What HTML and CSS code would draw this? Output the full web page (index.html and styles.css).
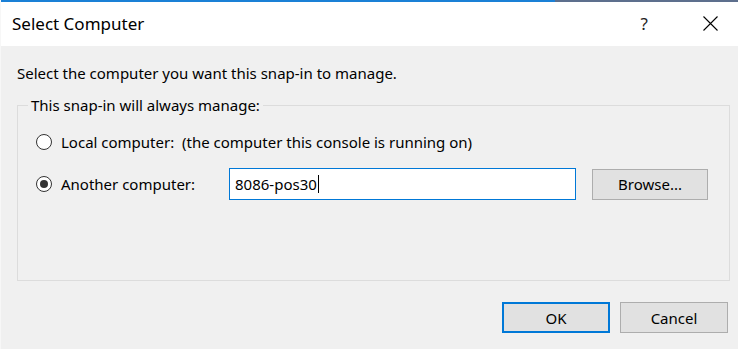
FILE: index.html
```html
<!DOCTYPE html>
<html lang="en">
  <head>
    <meta charset="UTF-8" />
    <meta name="viewport" content="width=device-width, initial-scale=1.0" />
    <title>Select Computer</title>
    <link rel="stylesheet" href="styles.css">
  </head>
  <body>
    <div class="window">
      <div class="frame-top"></div>
      <div class="titlebar">
        <span class="title">Select Computer</span>
        <span class="help-btn">?</span>
        <svg class="close-btn" width="15" height="15" viewBox="0 0 15 15">
          <path d="M0.5 0.5 L14.5 14.5 M14.5 0.5 L0.5 14.5" stroke="#000" stroke-width="1.1" fill="none" />
        </svg>
      </div>

      <div class="content">
        <p class="intro">Select the computer you want this snap-in to manage.</p>

        <fieldset class="group">
          <legend>This snap-in will always manage:</legend>
          <div class="row">
            <label class="option"><span class="radio"></span>Local computer:&nbsp; (the computer this console is running on)</label>
          </div>
          <div class="row">
            <label class="option option-fixed"><span class="radio checked"></span>Another computer:</label>
            <div class="textbox"><span>8086-pos30</span><span class="caret"></span></div>
            <button class="btn browse-btn">Browse...</button>
          </div>
        </fieldset>

        <div class="actions">
          <button class="btn default">OK</button>
          <button class="btn">Cancel</button>
        </div>
      </div>
    </div>
  </body>
</html>
```

FILE: styles.css
```css
* {
  margin: 0;
  padding: 0;
  box-sizing: border-box;
}

body {
  font-family: 'Noto Sans', 'Open Sans', sans-serif;
  font-size: 15px;
  color: #000;
  background-color: #f0f0f0;
  width: 738px;
  height: 349px;
  overflow: hidden;
}

.window {
  height: 349px;
  background-color: #f0f0f0;
  border-left: 1px solid #f7f7f7;
}

.frame-top {
  height: 2px;
  background: linear-gradient(to right, #1a80d6 0, #1a80d6 554px, #5d6f8d 554px);
}

.titlebar {
  height: 44px;
  background-color: #fff;
  display: flex;
  align-items: center;
  padding-left: 11px;
}

.title {
  font-size: 17px;
  flex: 1;
  padding-bottom: 2px;
}

.help-btn {
  font-size: 17px;
  color: #222;
  margin-right: 55px;
  padding-bottom: 2px;
}

.close-btn {
  margin-right: 20px;
  margin-bottom: 2px;
}

.content {
  padding: 17px 8px 0 16px;
}

.intro {
  line-height: 20px;
}

.group {
  margin-top: 12px;
  border: 1px solid #dcdcdc;
  padding: 11px 0 80px 0;
}

.group legend {
  margin-left: 10px;
  padding: 0 3px;
  line-height: 20px;
}

.row {
  height: 32px;
  display: flex;
  align-items: center;
  padding-left: 18px;
}

.row + .row {
  margin-top: 10px;
}

.option {
  display: flex;
  align-items: center;
  white-space: nowrap;
}

.option-fixed {
  width: 193px;
  flex-shrink: 0;
}

.radio {
  width: 16px;
  height: 16px;
  flex-shrink: 0;
  border: 1px solid #333;
  border-radius: 50%;
  background-color: #fff;
  margin-right: 9px;
  display: flex;
  align-items: center;
  justify-content: center;
}

.radio.checked::after {
  content: "";
  width: 8px;
  height: 8px;
  border-radius: 50%;
  background-color: #333;
}

.textbox {
  width: 347px;
  height: 32px;
  flex-shrink: 0;
  border: 1px solid #0078d7;
  background-color: #fff;
  display: flex;
  align-items: center;
  padding-left: 5px;
}

.caret {
  width: 1px;
  height: 18px;
  background-color: #000;
  margin-left: 1px;
}

.btn {
  font-family: inherit;
  font-size: 15px;
  color: #000;
  background-color: #e1e1e1;
  border: 1px solid #adadad;
  height: 31px;
}

.browse-btn {
  width: 116px;
  margin-left: 16px;
}

.actions {
  display: flex;
  justify-content: flex-end;
  gap: 10px;
  margin-top: 21px;
  padding-right: 2px;
}

.actions .btn {
  width: 108px;
}

.btn.default {
  border: 2px solid #0078d7;
}
```
